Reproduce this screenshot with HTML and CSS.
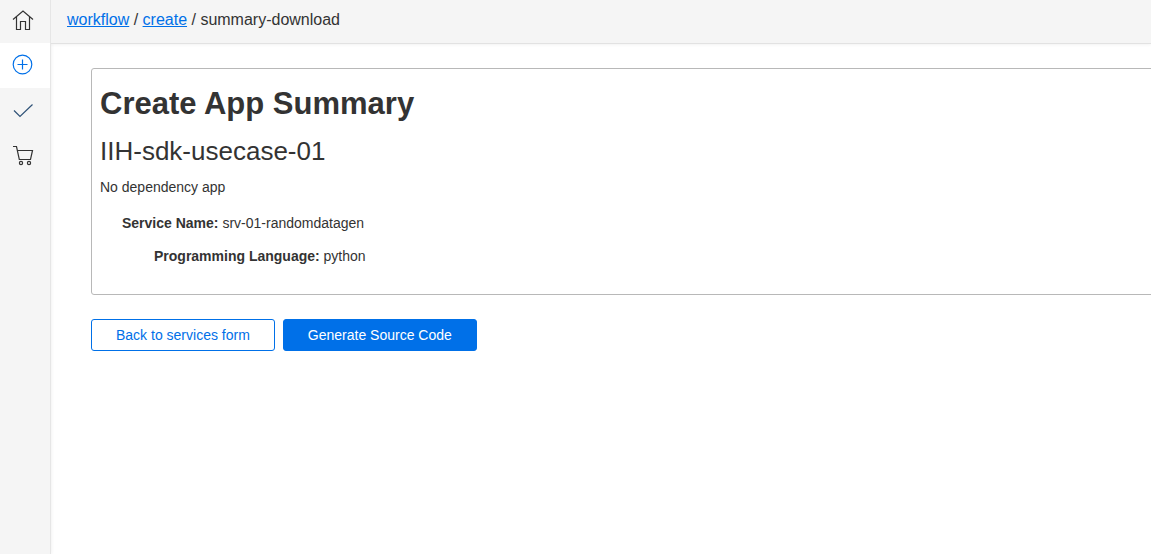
FILE: index.html
```html
<!DOCTYPE html>
<html lang="en">
<head>
<meta charset="utf-8">
<meta name="viewport" content="width=device-width, initial-scale=1">
<title>Create App Summary</title>
<link rel="stylesheet" href="styles.css">
</head>
<body>
<div class="app">
  <nav class="sidebar" aria-label="Main">
    <a class="nav-item nav-home" href="#home" aria-label="Home">
      <svg class="icon" viewBox="0 0 22 22"><path d="M1 10.500 11 2 21 10.500M4.500 8v12.500h4v-8h5v8h4V8"/></svg>
    </a>
    <a class="nav-item nav-active" href="#create" aria-label="Create" aria-current="page">
      <svg class="icon" viewBox="0 0 22 22"><circle cx="10.500" cy="10.500" r="9.300"/><path d="M10.500 5.500v10M5.500 10.500h10"/></svg>
    </a>
    <a class="nav-item nav-check" href="#validate" aria-label="Validate">
      <svg class="icon" viewBox="0 0 22 22"><path d="M2 11.500l6 6L20.500 5.500"/></svg>
    </a>
    <a class="nav-item" href="#store" aria-label="Store">
      <svg class="icon" viewBox="0 0 22 22"><path d="M1 2.500h3.500L7.300 15.500H18.500l2-9H5.300"/><circle cx="9" cy="19" r="1.600"/><circle cx="17" cy="19" r="1.600"/></svg>
    </a>
  </nav>
  <div class="page">
    <header class="topbar">
      <nav aria-label="Breadcrumb"><a href="#workflow">workflow</a> / <a href="#create">create</a> / <span>summary-download</span></nav>
    </header>
    <main class="content">
      <section class="summary">
        <h1>Create App Summary</h1>
        <h2>IIH-sdk-usecase-01</h2>
        <p class="dependency">No dependency app</p>
        <div class="service">
          <p><strong>Service Name:</strong> srv-01-randomdatagen</p>
          <p class="language"><strong>Programming Language:</strong> python</p>
        </div>
      </section>
      <div class="actions">
        <button class="btn" type="button">Back to services form</button>
        <button class="btn btn-primary" type="button">Generate Source Code</button>
      </div>
    </main>
  </div>
</div>
</body>
</html>
```
FILE: styles.css
```css
* {
  box-sizing: border-box;
}

body {
  margin: 0;
  background: #fff;
  color: #333;
  font: 14px/20px "Liberation Sans", Arial, sans-serif;
}

.app {
  display: flex;
  min-height: 100vh;
}

.sidebar {
  flex: none;
  width: 51px;
  background: #f5f5f5;
  border-right: 1px solid #e6e6e6;
  box-shadow: 1px 0 3px rgba(0, 0, 0, 0.05);
}

.nav-item {
  display: flex;
  align-items: center;
  height: 45px;
  padding: 0 0 1px 12px;
  color: #333;
}

.nav-home {
  height: 43px;
  padding-bottom: 3px;
}

.nav-active {
  background: #fff;
  color: #0070e8;
}

.nav-check {
  color: #2f5277;
}

.icon {
  width: 22px;
  height: 22px;
  fill: none;
  stroke: currentColor;
  stroke-width: 1.2;
}

.page {
  flex: 1;
  min-width: 0;
  overflow: hidden;
}

.topbar {
  padding: 10px 16px 13px;
  background: #f5f5f5;
  border-bottom: 1px solid #e2e2e2;
  box-shadow: 0 1px 3px rgba(0, 0, 0, 0.05);
  font-size: 16px;
}

a {
  color: #0070e8;
}

.content {
  padding: 24px 0 24px 40px;
}

.summary {
  margin-right: -16px;
  padding: 14px 8px 28px;
  border: 1px solid #b8b8b8;
  border-radius: 3px;
}

h1,
h2,
p {
  margin: 0;
}

h1 {
  font-size: 31px;
  line-height: 42px;
}

h2 {
  margin-top: 10px;
  font-size: 26px;
  font-weight: 400;
  line-height: 32px;
}

.dependency {
  margin-top: 10px;
}

.service {
  display: grid;
  gap: 13px;
  margin-top: 16px;
  padding-left: 22px;
}

.language {
  padding-left: 32px;
}

.actions {
  display: flex;
  gap: 8px;
  margin-top: 24px;
}

.btn {
  height: 32px;
  padding: 0 24px;
  border: 1px solid #0070e8;
  border-radius: 3px;
  background: #fff;
  color: #0070e8;
  font: inherit;
}

.btn-primary {
  background: #0070e8;
  color: #fff;
}
```
